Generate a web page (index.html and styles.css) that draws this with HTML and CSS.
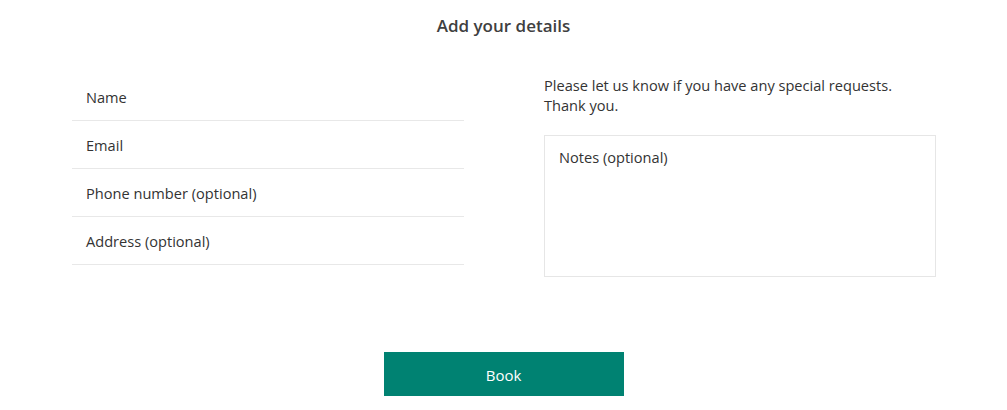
FILE: index.html
```html
<!DOCTYPE html>
<html>
<head>
<meta charset="utf-8">
<link rel="stylesheet" href="styles.css">
</head>
<body>
<div class="page">
  <h1 class="title">Add your details</h1>
  <div class="columns">
    <div class="fields">
      <div class="field">Name</div>
      <div class="field">Email</div>
      <div class="field">Phone number (optional)</div>
      <div class="field">Address (optional)</div>
    </div>
    <div class="notes-col">
      <p class="hint">Please let us know if you have any special requests.<br>Thank you.</p>
      <div class="notes">Notes (optional)</div>
    </div>
  </div>
  <div class="actions">
    <button class="book">Book</button>
  </div>
</div>
</body>
</html>
```
FILE: styles.css
```css
* { box-sizing: border-box; }
html, body { margin: 0; padding: 0; background: #fff; }
body {
  font-family: "Open Sans", "Noto Sans", sans-serif;
  font-size: 14.6px;
  color: #333;
  width: 1007px;
}
.page {
  display: flex;
  flex-direction: column;
  align-items: center;
  padding-top: 14px;
}
.title {
  margin: 0;
  font-size: 17px;
  font-weight: 600;
  line-height: 24px;
  color: #404040;
}
.columns {
  display: flex;
  gap: 80px;
  margin-top: 35px;
  margin-left: 1px;
}
.fields {
  width: 392px;
  display: flex;
  flex-direction: column;
}
.field {
  height: 48px;
  line-height: 48px;
  padding-left: 14px;
  border-bottom: 1px solid #e8e8e8;
}
.notes-col {
  width: 392px;
}
.hint {
  margin: 2px 0 0 0;
  line-height: 20px;
}
.notes {
  margin-top: 20px;
  height: 142px;
  border: 1px solid #e6e6e6;
  padding: 11px 14px;
  line-height: 20px;
}
.actions {
  margin-top: 75px;
  display: flex;
  justify-content: center;
}
.book {
  width: 240px;
  height: 44px;
  background: #008272;
  border: none;
  color: #fff;
  font-family: "Open Sans", "Noto Sans", sans-serif;
  font-size: 15px;
  padding: 1px 0 0 0;
}
```
